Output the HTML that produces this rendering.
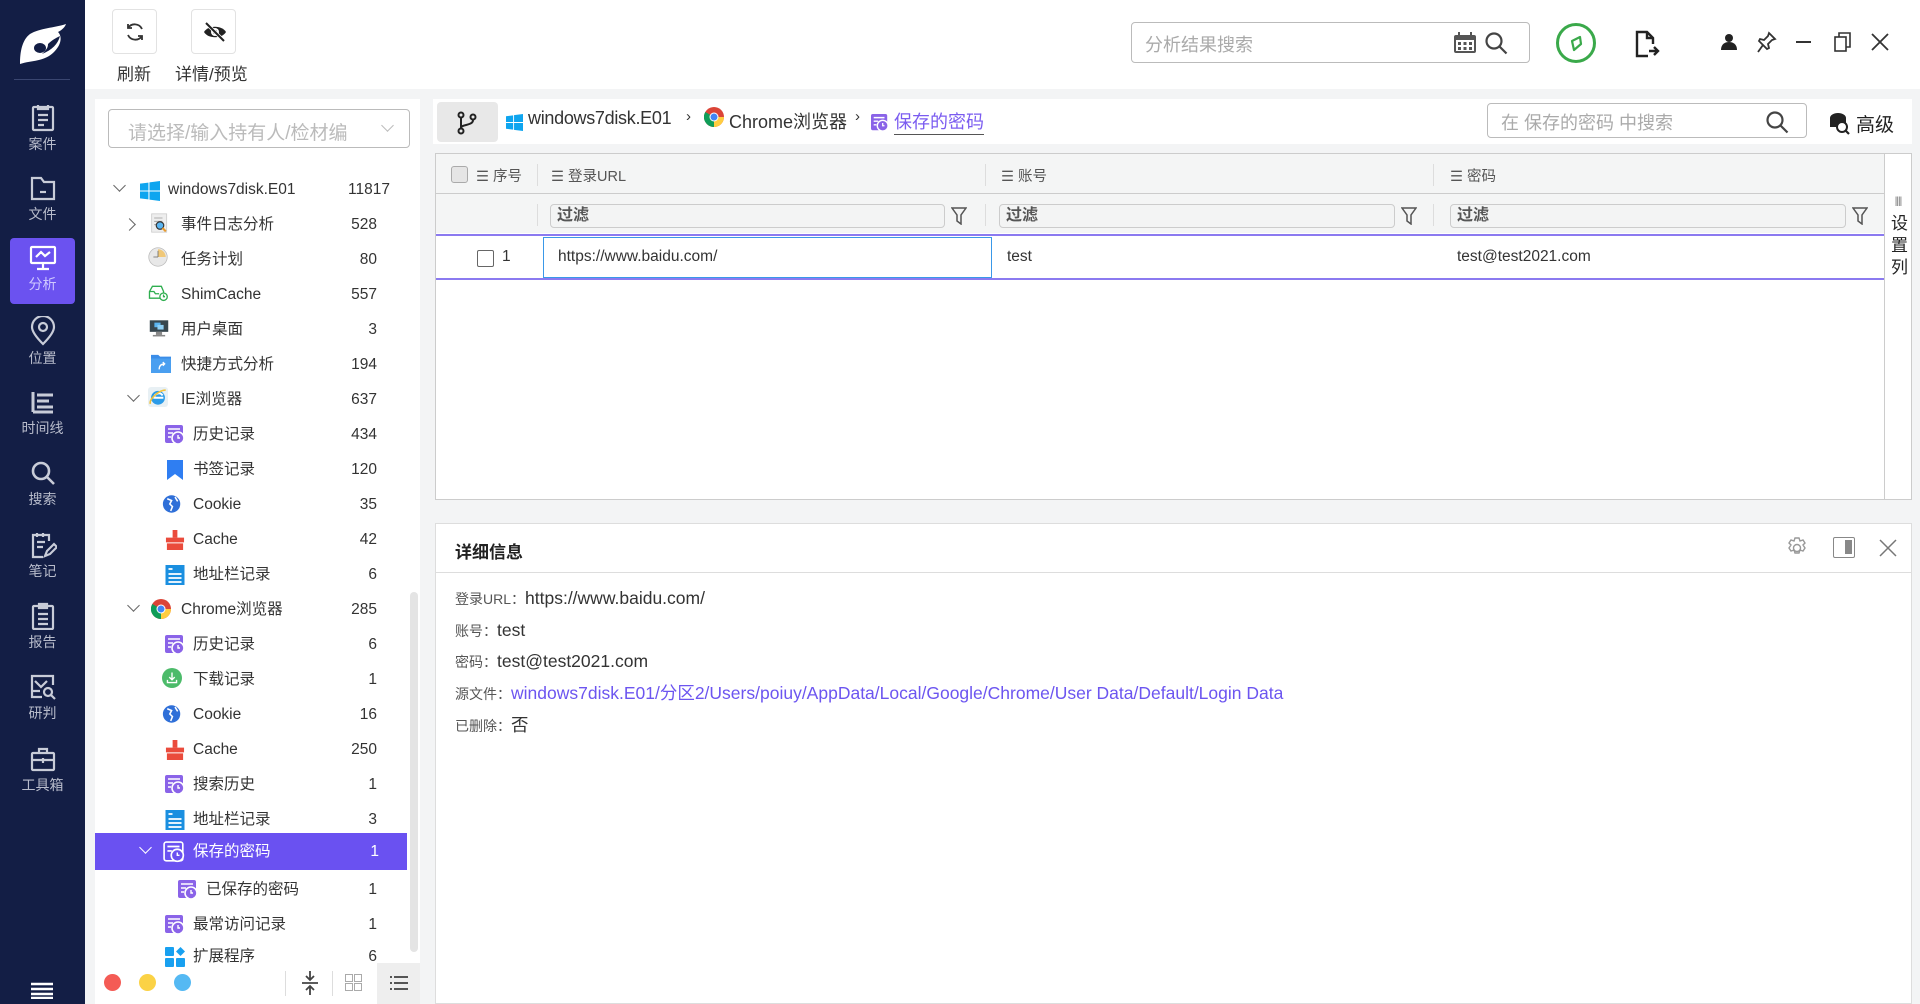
<!DOCTYPE html>
<html><head><meta charset="utf-8">
<style>
*{box-sizing:border-box;margin:0;padding:0}
body{width:1920px;height:1004px;overflow:hidden;background:#f3f4f5;font-family:"Liberation Sans","Noto Sans CJK SC",sans-serif;color:#333;position:relative}
.abs{position:absolute}
#side{left:0;top:0;width:85px;height:1004px;background:#131e45}
.si{position:absolute;left:10px;width:65px;height:66px;text-align:center;color:#b8bccb;font-size:14px}
.si svg{display:block;margin:6px auto 2px}
.si.act{background:#6b52f0;border-radius:4px;color:#cfc8ff}
#top{left:85px;top:0;width:1835px;height:89px;background:#fff}
.tb{position:absolute;top:9px;width:45px;height:45px;border:1px solid #e2e2e2;border-radius:4px;background:#fff}
.tbl{position:absolute;top:60px;font-size:17px;color:#333}
#left{left:95px;top:99px;width:325px;height:905px;background:#fff}
.row{position:absolute;left:0;width:310px;height:35px;font-size:15.5px;color:#333;line-height:35px}
.row .n{position:absolute;right:28px;top:0}
.row .t{position:absolute;top:0}
.ic{position:absolute;top:8px;width:20px;height:20px}
.chev{position:absolute;top:13px;width:9px;height:9px;border-right:1.5px solid #666;border-bottom:1.5px solid #666}
.sel{background:#6a51f1;color:#fff}
.cell{position:absolute;font-size:15.5px}
.filt{position:absolute;top:204px;height:24px;border:1px solid #ccc;border-radius:4px;background:#f3f4f4;font-size:16px;font-weight:bold;color:#555;padding-left:6px;line-height:22px}
.hd{position:absolute;top:165px;font-size:14.5px;color:#555}
.lbl{font-size:14px;color:#555}
</style></head><body>
<svg width="0" height="0" style="position:absolute"><defs>
<symbol id="hist" viewBox="0 0 20 20"><rect x="0" y="0" width="18" height="18" rx="2" fill="#8a63e8"/><path d="M3 4h12M3 8h5M3 12h3" stroke="#fff" stroke-width="1.6"/><circle cx="13" cy="13" r="6" fill="#8a63e8" stroke="#fff" stroke-width="1.6"/><path d="M13 10v3h2" stroke="#fff" stroke-width="1.4" fill="none"/></symbol>
<symbol id="histw" viewBox="0 0 20 20"><rect x="1" y="1" width="17" height="17" rx="2" fill="none" stroke="#fff" stroke-width="1.5"/><path d="M4 5h11M4 9h4" stroke="#fff" stroke-width="1.5"/><circle cx="13" cy="13" r="5.5" fill="#6a51f1" stroke="#fff" stroke-width="1.5"/><path d="M13 10.5v2.5h2" stroke="#fff" stroke-width="1.3" fill="none"/></symbol>
</defs></svg>

<div id="side" class="abs">
  <svg class="abs" style="left:18px;top:22px" width="50" height="44" viewBox="0 0 50 44"><path d="M48 2C36 6 22 6 12 12 4 18 2 30 2 42 14 38 26 40 36 30 44 22 44 14 40 10 44 8 47 5 48 2Z" fill="#fff"/><ellipse cx="22" cy="26" rx="6" ry="5" fill="#131e45"/><path d="M30 22C34 18 38 16 42 14 40 22 34 28 24 32 28 28 30 26 30 22Z" fill="#131e45"/></svg>
  <div class="abs" style="left:14px;top:79px;width:56px;height:1px;background:#3a4670"></div>
  <div class="si" style="top:98px"><svg width="26" height="28" viewBox="0 0 26 28" fill="none" stroke="#c8ccd8" stroke-width="2.2"><rect x="3" y="3" width="20" height="23" rx="1"/><path d="M8 1v4h10V1M8 11h10M8 16h10M8 21h6"/></svg>案件</div>
  <div class="si" style="top:168px"><svg width="26" height="28" viewBox="0 0 26 28" fill="none" stroke="#c8ccd8" stroke-width="2.2"><path d="M2 4h9l3 4h10v17H2Z"/><path d="M10 18h6"/></svg>文件</div>
  <div class="si act" style="top:238px"><svg width="28" height="28" viewBox="0 0 28 28" fill="none" stroke="#fff" stroke-width="2.2"><rect x="2" y="3" width="24" height="16" rx="1"/><path d="M7 13l5-5 4 4 5-4M14 19v5M8 25h12"/></svg>分析</div>
  <div class="si" style="top:310px"><svg width="28" height="30" viewBox="0 0 28 30" fill="none" stroke="#c8ccd8" stroke-width="2.2"><path d="M14 28C6 20 3 15 3 11a11 11 0 0 1 22 0c0 4-3 9-11 17Z"/><circle cx="14" cy="11" r="4"/></svg>位置</div>
  <div class="si" style="top:382px"><svg width="28" height="28" viewBox="0 0 28 28" stroke="#c8ccd8" stroke-width="3"><path d="M4 4v20M8 7h16M8 13h12M8 19h16M4 24h20"/></svg>时间线</div>
  <div class="si" style="top:453px"><svg width="28" height="28" viewBox="0 0 28 28" fill="none" stroke="#c8ccd8" stroke-width="2.6"><circle cx="12" cy="12" r="8"/><path d="M18 18l7 7"/></svg>搜索</div>
  <div class="si" style="top:525px"><svg width="28" height="28" viewBox="0 0 28 28" fill="none" stroke="#c8ccd8" stroke-width="2.2"><path d="M20 10V4H4v22h10M8 2v4M14 2v4M8 11h8M8 16h6"/><path d="M16 25l2-5 7-7 3 3-7 7Z"/></svg>笔记</div>
  <div class="si" style="top:596px"><svg width="28" height="28" viewBox="0 0 28 28" fill="none" stroke="#c8ccd8" stroke-width="2.2"><rect x="4" y="4" width="20" height="23" rx="1"/><path d="M10 2h8v4h-8zM9 12h10M9 17h10M9 22h10"/></svg>报告</div>
  <div class="si" style="top:667px"><svg width="28" height="28" viewBox="0 0 28 28" fill="none" stroke="#c8ccd8" stroke-width="2.2"><path d="M24 12V3H3v21h10M3 18h8"/><path d="M6 8l6 6 6-6"/><circle cx="19" cy="19" r="4"/><path d="M22 22l4 4"/></svg>研判</div>
  <div class="si" style="top:739px"><svg width="28" height="28" viewBox="0 0 28 28" fill="none" stroke="#c8ccd8" stroke-width="2.2"><rect x="3" y="8" width="22" height="17" rx="1"/><path d="M10 8V4h8v4M3 15h22M14 13v5"/></svg>工具箱</div>
  <svg class="abs" style="left:31px;top:982px" width="22" height="17" viewBox="0 0 22 17" stroke="#fff" stroke-width="2.4"><path d="M0 2h22M0 7h22M0 12h22M0 16h22"/></svg>
</div>

<div id="top" class="abs">
  <div class="tb" style="left:27px"><svg style="margin:11px" width="22" height="22" viewBox="0 0 22 22" fill="none" stroke="#333" stroke-width="1.8"><path d="M18 8A8 8 0 0 0 4 7M4 14a8 8 0 0 0 14 1"/><path d="M4 3v4h4M18 19v-4h-4"/></svg></div>
  <div class="tb" style="left:106px"><svg style="margin:11px" width="24" height="22" viewBox="0 0 24 22"><path d="M1 11C5 4 19 4 23 11 19 18 5 18 1 11Z" fill="#222"/><circle cx="12" cy="11" r="4" fill="#fff"/><circle cx="12" cy="11" r="2" fill="#222"/><path d="M3 2l18 18" stroke="#fff" stroke-width="3.5"/><path d="M3 2l18 18" stroke="#222" stroke-width="2"/></svg></div>
  <div class="tbl" style="left:32px">刷新</div>
  <div class="tbl" style="left:90px">详情/预览</div>
  <div class="abs" style="left:1046px;top:22px;width:399px;height:41px;border:1px solid #bbb;border-radius:4px">
    <span class="abs" style="left:13px;top:8px;font-size:18px;color:#aaa">分析结果搜索</span>
    <svg class="abs" style="left:321px;top:9px" width="24" height="22" viewBox="0 0 24 22"><rect x="1" y="3" width="22" height="18" rx="2" fill="#555"/><rect x="3" y="8" width="18" height="11" fill="#fff"/><g fill="#555"><rect x="5" y="10" width="3" height="3"/><rect x="10.5" y="10" width="3" height="3"/><rect x="16" y="10" width="3" height="3"/><rect x="5" y="15" width="3" height="3"/><rect x="10.5" y="15" width="3" height="3"/><rect x="16" y="15" width="3" height="3"/></g><path d="M6 0v5M18 0v5" stroke="#555" stroke-width="2"/></svg>
    <svg class="abs" style="left:352px;top:8px" width="24" height="24" viewBox="0 0 24 24" fill="none" stroke="#444" stroke-width="2.2"><circle cx="10" cy="10" r="7.5"/><path d="M15.5 15.5l7 7"/></svg>
  </div>
  <svg class="abs" style="left:1470px;top:22px" width="42" height="42" viewBox="0 0 42 42" fill="none" stroke="#3aa94a" stroke-width="3"><circle cx="21" cy="21" r="18.5"/><path d="M19 28l-2-9 8-4 1 7z" stroke-width="2.2" stroke-linejoin="round"/></svg>
  <svg class="abs" style="left:1549px;top:30px" width="26" height="28" viewBox="0 0 26 28" fill="none" stroke="#222" stroke-width="2.4"><path d="M14 26H3V2h10l6 6v6"/><path d="M13 2v6h6"/><path d="M15 21h9M20 17l4 4-4 4" fill="none"/></svg>
  <svg class="abs" style="left:1635px;top:33px" width="18" height="18" viewBox="0 0 18 18" fill="#222"><circle cx="9" cy="5" r="4"/><path d="M1 17c0-6 4-8 8-8s8 2 8 8z"/></svg>
  <svg class="abs" style="left:1672px;top:31px" width="20" height="22" viewBox="0 0 20 22" fill="none" stroke="#333" stroke-width="1.8"><path d="M12 2l6 6-3 1-4 4 1 4-2 1-8-8 1-2 4 1 4-4z"/><path d="M6 14l-5 7"/></svg>
  <div class="abs" style="left:1711px;top:41px;width:15px;height:2px;background:#333"></div>
  <svg class="abs" style="left:1749px;top:32px" width="18" height="20" viewBox="0 0 18 20" fill="none" stroke="#333" stroke-width="1.6"><rect x="1" y="5" width="11" height="14"/><path d="M5 5V1h11v14h-4"/></svg>
  <svg class="abs" style="left:1786px;top:33px" width="18" height="18" viewBox="0 0 18 18" stroke="#333" stroke-width="1.8"><path d="M1 1l16 16M17 1L1 17"/></svg>
</div>

<div id="left" class="abs">
  <div class="abs" style="left:13px;top:10px;width:302px;height:39px;border:1px solid #bbb;border-radius:4px;font-size:19px;color:#bbb;padding:8px 0 0 19px">请选择/输入持有人/检材编<span style="position:absolute;right:17px;top:11px;width:9px;height:9px;border-right:1.5px solid #bbb;border-bottom:1.5px solid #bbb;transform:rotate(45deg)"></span></div>

  <div class="row" style="top:73px"><span class="chev" style="left:20px;top:9px;transform:rotate(45deg)"></span><svg class="ic" style="left:45px;top:9px" width="19" height="19" viewBox="0 0 19 19" fill="#0ea5ef"><path d="M0 2.5l8-1v7.5H0zM9 1.3L19 0v9H9zM0 10h8v7.5l-8-1zM9 10h10v9l-10-1.3z"/></svg><span class="t" style="left:73px">windows7disk.E01</span><span class="n" style="right:15px">11817</span></div>
  <div class="row" style="top:108px"><span class="chev" style="left:30px;transform:rotate(-45deg)"></span><svg class="ic" style="left:55px;top:6px" width="22" height="24" viewBox="0 0 22 24"><rect x="1" y="1" width="18" height="22" fill="#eee" stroke="#ccc"/><path d="M4 6h10M4 10h10M4 14h6" stroke="#999"/><circle cx="11" cy="15" r="4.5" fill="#5bb5f0" stroke="#333" stroke-width="1.4"/><path d="M14 18l4 4" stroke="#e89b2e" stroke-width="2.5"/></svg><span class="t" style="left:86px">事件日志分析</span><span class="n">528</span></div>
  <div class="row" style="top:143px"><svg class="ic" style="left:53px;top:5px" width="26" height="26" viewBox="0 0 26 26"><circle cx="13" cy="13" r="12" fill="#e8e8e8" stroke="#bbb"/><path d="M13 13V3a10 10 0 0 1 10 10z" fill="#f0c878"/><path d="M13 13V5M13 13h-6" stroke="#666"/></svg><span class="t" style="left:86px">任务计划</span><span class="n">80</span></div>
  <div class="row" style="top:178px"><svg class="ic" style="left:53px;top:6px" width="27" height="24" viewBox="0 0 27 24" fill="none" stroke="#2fae4f" stroke-width="1.8"><path d="M2 10l4-7h12l3 7v9H2z"/><path d="M2 10h6l2 3h5"/><circle cx="21" cy="17" r="5" fill="#fff"/><path d="M21 14v3h2"/></svg><span class="t" style="left:86px">ShimCache</span><span class="n">557</span></div>
  <div class="row" style="top:213px"><svg class="ic" style="left:54px;top:6px" width="26" height="22" viewBox="0 0 26 22"><rect x="1" y="1" width="24" height="15" fill="#37474f"/><rect x="7" y="4" width="8" height="6" fill="#5bb5f0"/><rect x="11" y="7" width="8" height="6" fill="#8fd0f5"/><rect x="9" y="16" width="8" height="4" fill="#888"/><rect x="5" y="20" width="16" height="2" fill="#888"/></svg><span class="t" style="left:86px">用户桌面</span><span class="n">3</span></div>
  <div class="row" style="top:248px"><svg class="ic" style="left:56px;top:6px" width="22" height="22" viewBox="0 0 22 22"><path d="M0 2h8l2 2h12v18H0z" fill="#3b8de8"/><rect x="0" y="6" width="22" height="16" fill="#4a9ff0"/><path d="M9 18c0-4 2-6 6-6M13 10l2 2-2 2" stroke="#fff" fill="none" stroke-width="1.5"/></svg><span class="t" style="left:86px">快捷方式分析</span><span class="n">194</span></div>
  <div class="row" style="top:283px"><span class="chev" style="left:34px;top:9px;transform:rotate(45deg)"></span><svg class="ic" style="left:53px;top:5px" width="26" height="26" viewBox="0 0 26 26"><rect x="0" y="0" width="26" height="26" rx="4" fill="#e8f0f4"/><circle cx="13" cy="14" r="9" fill="#2b9be8"/><path d="M7 14h13M8 14a6 6 0 0 1 11-3" stroke="#fff" stroke-width="2.5" fill="none"/><path d="M3 22C1 16 14 4 23 4" stroke="#f3c23a" stroke-width="2" fill="none"/></svg><span class="t" style="left:86px">IE浏览器</span><span class="n">637</span></div>
  <div class="row" style="top:318px"><svg class="ic" style="left:70px"><use href="#hist"/></svg><span class="t" style="left:98px">历史记录</span><span class="n">434</span></div>
  <div class="row" style="top:353px"><svg class="ic" style="left:70px" width="20" height="20" viewBox="0 0 20 20"><path d="M2 0h16v20l-8-6-8 6z" fill="#2f7ef2"/></svg><span class="t" style="left:98px">书签记录</span><span class="n">120</span></div>
  <div class="row" style="top:388px"><svg class="ic" style="left:67px;top:7px" width="23" height="22" viewBox="0 0 23 22"><circle cx="11" cy="11" r="10" fill="#2f6fd8"/><path d="M6 5l5 2-2 4 3 3-2 5M15 3l3 5" stroke="#fff" stroke-width="1.8" fill="none"/></svg><span class="t" style="left:98px">Cookie</span><span class="n">35</span></div>
  <div class="row" style="top:423px"><svg class="ic" style="left:70px" width="19" height="21" viewBox="0 0 19 21" fill="#ea4b3c"><rect x="7" y="0" width="5" height="8"/><rect x="0" y="8" width="19" height="5"/><path d="M1 14h17v7H1z"/></svg><span class="t" style="left:98px">Cache</span><span class="n">42</span></div>
  <div class="row" style="top:458px"><svg class="ic" style="left:70px" width="19" height="20" viewBox="0 0 19 20"><rect width="19" height="20" fill="#1a8fe0"/><path d="M3 4h4M3 9h13M3 13h13M3 17h13" stroke="#fff" stroke-width="1.7"/></svg><span class="t" style="left:98px">地址栏记录</span><span class="n">6</span></div>
  <div class="row" style="top:493px"><span class="chev" style="left:34px;top:9px;transform:rotate(45deg)"></span><svg class="ic" style="left:56px;top:7px" width="20" height="20" viewBox="0 0 20 20"><circle cx="10" cy="10" r="10" fill="#db4437"/><path d="M10 10L1.3 5A10 10 0 0 0 10 20z" fill="#0f9d58"/><path d="M10 10h10A10 10 0 0 1 10 20z" fill="#ffcd40"/><circle cx="10" cy="10" r="4.5" fill="#fff"/><circle cx="10" cy="10" r="3.5" fill="#4285f4"/></svg><span class="t" style="left:86px">Chrome浏览器</span><span class="n">285</span></div>
  <div class="row" style="top:528px"><svg class="ic" style="left:70px"><use href="#hist"/></svg><span class="t" style="left:98px">历史记录</span><span class="n">6</span></div>
  <div class="row" style="top:563px"><svg class="ic" style="left:67px;top:6px" width="22" height="22" viewBox="0 0 22 22"><circle cx="11" cy="11" r="11" fill="#4cbb6a"/><path d="M11 5v8M8 10l3 3 3-3M6 13v3h10v-3" stroke="#fff" stroke-width="1.5" fill="none"/></svg><span class="t" style="left:98px">下载记录</span><span class="n">1</span></div>
  <div class="row" style="top:598px"><svg class="ic" style="left:67px;top:7px" width="23" height="22" viewBox="0 0 23 22"><circle cx="11" cy="11" r="10" fill="#2f6fd8"/><path d="M6 5l5 2-2 4 3 3-2 5M15 3l3 5" stroke="#fff" stroke-width="1.8" fill="none"/></svg><span class="t" style="left:98px">Cookie</span><span class="n">16</span></div>
  <div class="row" style="top:633px"><svg class="ic" style="left:70px" width="19" height="21" viewBox="0 0 19 21" fill="#ea4b3c"><rect x="7" y="0" width="5" height="8"/><rect x="0" y="8" width="19" height="5"/><path d="M1 14h17v7H1z"/></svg><span class="t" style="left:98px">Cache</span><span class="n">250</span></div>
  <div class="row" style="top:668px"><svg class="ic" style="left:70px"><use href="#hist"/></svg><span class="t" style="left:98px">搜索历史</span><span class="n">1</span></div>
  <div class="row" style="top:703px"><svg class="ic" style="left:70px" width="19" height="20" viewBox="0 0 19 20"><rect width="19" height="20" fill="#1a8fe0"/><path d="M3 4h4M3 9h13M3 13h13M3 17h13" stroke="#fff" stroke-width="1.7"/></svg><span class="t" style="left:98px">地址栏记录</span><span class="n">3</span></div>
  <div class="row sel" style="top:734px;height:37px;width:312px;line-height:37px"><span class="chev" style="left:46px;top:10px;transform:rotate(45deg);border-color:#fff"></span><svg class="ic" style="left:68px;top:8px;width:22px;height:22px"><use href="#histw"/></svg><span class="t" style="left:98px">保存的密码</span><span class="n">1</span></div>
  <div class="row" style="top:773px"><svg class="ic" style="left:83px"><use href="#hist"/></svg><span class="t" style="left:111px">已保存的密码</span><span class="n">1</span></div>
  <div class="row" style="top:808px"><svg class="ic" style="left:70px"><use href="#hist"/></svg><span class="t" style="left:98px">最常访问记录</span><span class="n">1</span></div>
  <div class="row" style="top:840px"><svg class="ic" style="left:70px" width="20" height="20" viewBox="0 0 20 20" fill="#18a0f0"><rect width="9" height="9" rx="1"/><rect x="11" y="11" width="9" height="9" rx="1"/><rect y="11" width="9" height="9" rx="1"/><path d="M15.5 0l4.5 4.5-4.5 4.5-4.5-4.5z"/></svg><span class="t" style="left:98px">扩展程序</span><span class="n">6</span></div>
  <div class="abs" style="left:315px;top:493px;width:8px;height:360px;background:#e4e4e4;border-radius:4px"></div>
  <div class="abs" style="left:0;top:870px;width:325px;height:35px;background:#fff"></div>
  <div class="abs" style="left:9px;top:875px;width:17px;height:17px;border-radius:50%;background:#f45b55"></div>
  <div class="abs" style="left:44px;top:875px;width:17px;height:17px;border-radius:50%;background:#fbd245"></div>
  <div class="abs" style="left:79px;top:875px;width:17px;height:17px;border-radius:50%;background:#55b9f3"></div>
  <div class="abs" style="left:190px;top:872px;width:1px;height:25px;background:#ddd"></div>
  <svg class="abs" style="left:205px;top:872px" width="20" height="24" viewBox="0 0 20 24" stroke="#444" stroke-width="1.8" fill="none"><path d="M10 0v8M6 5l4 4 4-4M2 12h16M10 24v-8M6 19l4-4 4 4"/></svg>
  <div class="abs" style="left:237px;top:872px;width:1px;height:25px;background:#ddd"></div>
  <svg class="abs" style="left:250px;top:875px" width="17" height="17" viewBox="0 0 17 17" stroke="#aaa" fill="none"><rect x=".5" y=".5" width="7" height="7"/><rect x="9.5" y=".5" width="7" height="7"/><rect x=".5" y="9.5" width="7" height="7"/><rect x="9.5" y="9.5" width="7" height="7"/></svg>
  <div class="abs" style="left:282px;top:864px;width:43px;height:41px;background:#eee"></div>
  <svg class="abs" style="left:295px;top:877px" width="18" height="14" viewBox="0 0 18 14" stroke="#555" stroke-width="2"><path d="M0 1h2M4 1h14M0 7h2M4 7h14M0 13h2M4 13h14"/></svg>
</div>

<!-- breadcrumb -->
<div class="abs" style="left:433px;top:99px;width:1479px;height:45px;background:#fff"></div>
<div class="abs" style="left:437px;top:102px;width:61px;height:40px;background:#e8e8e8;border-radius:4px"><svg style="margin:9px 0 0 19px" width="22" height="24" viewBox="0 0 22 24" fill="none" stroke="#222" stroke-width="2"><circle cx="5" cy="4" r="2.5"/><circle cx="5" cy="20" r="2.5"/><circle cx="17" cy="6" r="2.5"/><path d="M5 7v10M17 9c0 6-12 4-12 8"/></svg></div>
<svg class="abs" style="left:506px;top:114px" width="17" height="17" viewBox="0 0 19 19" fill="#0ea5ef"><path d="M0 2.5l8-1v7.5H0zM9 1.3L19 0v9H9zM0 10h8v7.5l-8-1zM9 10h10v9l-10-1.3z"/></svg>
<div class="abs" style="left:528px;top:108px;font-size:18px;color:#333;white-space:nowrap;width:170px;letter-spacing:-0.3px">windows7disk.E01</div>
<div class="abs" style="left:686px;top:108px;font-size:15px;color:#333">›</div>
<svg class="abs" style="left:704px;top:107px" width="20" height="20" viewBox="0 0 20 20"><circle cx="10" cy="10" r="10" fill="#db4437"/><path d="M10 10L1.3 5A10 10 0 0 0 10 20z" fill="#0f9d58"/><path d="M10 10h10A10 10 0 0 1 10 20z" fill="#ffcd40"/><circle cx="10" cy="10" r="4.5" fill="#fff"/><circle cx="10" cy="10" r="3.5" fill="#4285f4"/></svg>
<div class="abs" style="left:729px;top:108px;font-size:18px;color:#333;white-space:nowrap">Chrome浏览器</div>
<div class="abs" style="left:855px;top:108px;font-size:15px;color:#333">›</div>
<svg class="abs" style="left:871px;top:114px" width="18" height="18"><use href="#hist"/></svg>
<div class="abs" style="left:894px;top:108px;font-size:18px;color:#7b5cf0;border-bottom:1.5px solid #555">保存的密码</div>
<div class="abs" style="left:1487px;top:103px;width:320px;height:35px;border:1px solid #bbb;border-radius:4px"><span class="abs" style="left:13px;top:5px;font-size:18px;color:#aaa">在 保存的密码 中搜索</span><svg class="abs" style="left:277px;top:6px" width="24" height="24" viewBox="0 0 24 24" fill="none" stroke="#444" stroke-width="2.2"><circle cx="10" cy="10" r="7.5"/><path d="M15.5 15.5l7 7"/></svg></div>
<svg class="abs" style="left:1829px;top:112px" width="22" height="24" viewBox="0 0 22 24"><ellipse cx="9" cy="6" rx="8" ry="5" fill="#222"/><rect x="1" y="6" width="16" height="9" fill="#222"/><circle cx="13" cy="15" r="5" fill="#fff" stroke="#222" stroke-width="2"/><path d="M16 18l4 4" stroke="#222" stroke-width="2.2"/></svg>
<div class="abs" style="left:1856px;top:110px;font-size:19px;color:#222">高级</div>

<!-- table -->
<div class="abs" style="left:435px;top:153px;width:1477px;height:347px;background:#fff;border:1px solid #ccc"></div>
<div class="abs" style="left:436px;top:154px;width:1448px;height:79px;background:#f4f5f5"></div>
<div class="abs" style="left:436px;top:193px;width:1448px;height:1px;background:#ccc"></div>
<div class="abs" style="left:1884px;top:154px;width:1px;height:346px;background:#ccc"></div>
<div class="abs" style="left:451px;top:166px;width:17px;height:17px;border:1px solid #aaa;border-radius:3px;background:#e5e5e5"></div>
<div class="hd" style="left:476px">☰ 序号</div>
<div class="abs" style="left:537px;top:164px;width:1px;height:22px;background:#ddd"></div>
<div class="hd" style="left:551px">☰ 登录URL</div>
<div class="abs" style="left:985px;top:164px;width:1px;height:22px;background:#ddd"></div>
<div class="hd" style="left:1001px">☰ 账号</div>
<div class="abs" style="left:1433px;top:164px;width:1px;height:22px;background:#ddd"></div>
<div class="hd" style="left:1450px">☰ 密码</div>
<div class="abs" style="left:537px;top:204px;width:1px;height:22px;background:#ddd"></div>
<div class="filt" style="left:550px;width:395px">过滤</div>
<svg class="abs" style="left:951px;top:207px" width="16" height="18" viewBox="0 0 16 18" fill="none" stroke="#555" stroke-width="1.5"><path d="M1 1h14l-5 7v9l-4-3V8z"/></svg>
<div class="abs" style="left:985px;top:204px;width:1px;height:22px;background:#ddd"></div>
<div class="filt" style="left:999px;width:396px">过滤</div>
<svg class="abs" style="left:1401px;top:207px" width="16" height="18" viewBox="0 0 16 18" fill="none" stroke="#555" stroke-width="1.5"><path d="M1 1h14l-5 7v9l-4-3V8z"/></svg>
<div class="abs" style="left:1433px;top:204px;width:1px;height:22px;background:#ddd"></div>
<div class="filt" style="left:1450px;width:396px">过滤</div>
<svg class="abs" style="left:1852px;top:207px" width="16" height="18" viewBox="0 0 16 18" fill="none" stroke="#555" stroke-width="1.5"><path d="M1 1h14l-5 7v9l-4-3V8z"/></svg>
<div class="abs" style="left:436px;top:234px;width:1448px;height:2px;background:#8b7af0"></div>
<div class="abs" style="left:436px;top:278px;width:1448px;height:1.5px;background:#8b7af0"></div>
<div class="abs" style="left:477px;top:250px;width:17px;height:17px;border:1.5px solid #666;border-radius:2px"></div>
<div class="cell" style="left:502px;top:248px">1</div>
<div class="abs" style="left:543px;top:237px;width:449px;height:41px;border:1.5px solid #3a98e8"></div>
<div class="cell" style="left:558px;top:248px">https://www.baidu.com/</div>
<div class="cell" style="left:1007px;top:248px">test</div>
<div class="cell" style="left:1457px;top:248px">test@test2021.com</div>
<div class="abs" style="left:1891px;top:191px;font-size:17px;color:#222;width:14px;line-height:22px;text-align:center"><div style="font-size:10px;letter-spacing:-1px;color:#777">||||</div>设置列</div>

<!-- detail -->
<div class="abs" style="left:435px;top:523px;width:1477px;height:481px;background:#fff;border:1px solid #ddd"></div>
<div class="abs" style="left:436px;top:572px;width:1476px;height:1px;background:#ddd"></div>
<div class="abs" style="left:455px;top:538px;font-size:17px;font-weight:bold;color:#222">详细信息</div>
<svg class="abs" style="left:1786px;top:537px" width="22" height="22" viewBox="0 0 22 22" fill="none" stroke="#999" stroke-width="1.4"><circle cx="11" cy="11" r="3.5"/><path d="M9 1h4l1 3 3-1 2 3-2 2 2 3-2 3-3-1-1 3H9l-1-3-3 1-2-3 2-3-2-2 2-3 3 1z"/></svg>
<div class="abs" style="left:1833px;top:537px;width:22px;height:21px;border:1.5px solid #888;border-radius:2px"><div style="position:absolute;right:2px;top:2px;width:7px;height:14px;background:#888"></div></div>
<svg class="abs" style="left:1879px;top:539px" width="18" height="18" viewBox="0 0 18 18" stroke="#777" stroke-width="1.5"><path d="M1 1l16 16M17 1L1 17"/></svg>
<div class="abs" style="left:455px;top:583px;font-size:17.5px;color:#333;line-height:30.7px">
<div><span class="lbl">登录URL：</span>https://www.baidu.com/</div>
<div><span class="lbl">账号：</span>test</div>
<div><span class="lbl">密码：</span>test@test2021.com</div>
<div><span class="lbl">源文件：</span><span style="color:#6c55f0">windows7disk.E01/分区2/Users/poiuy/AppData/Local/Google/Chrome/User Data/Default/Login Data</span></div>
<div><span class="lbl">已删除：</span>否</div>
</div>
</body></html>
